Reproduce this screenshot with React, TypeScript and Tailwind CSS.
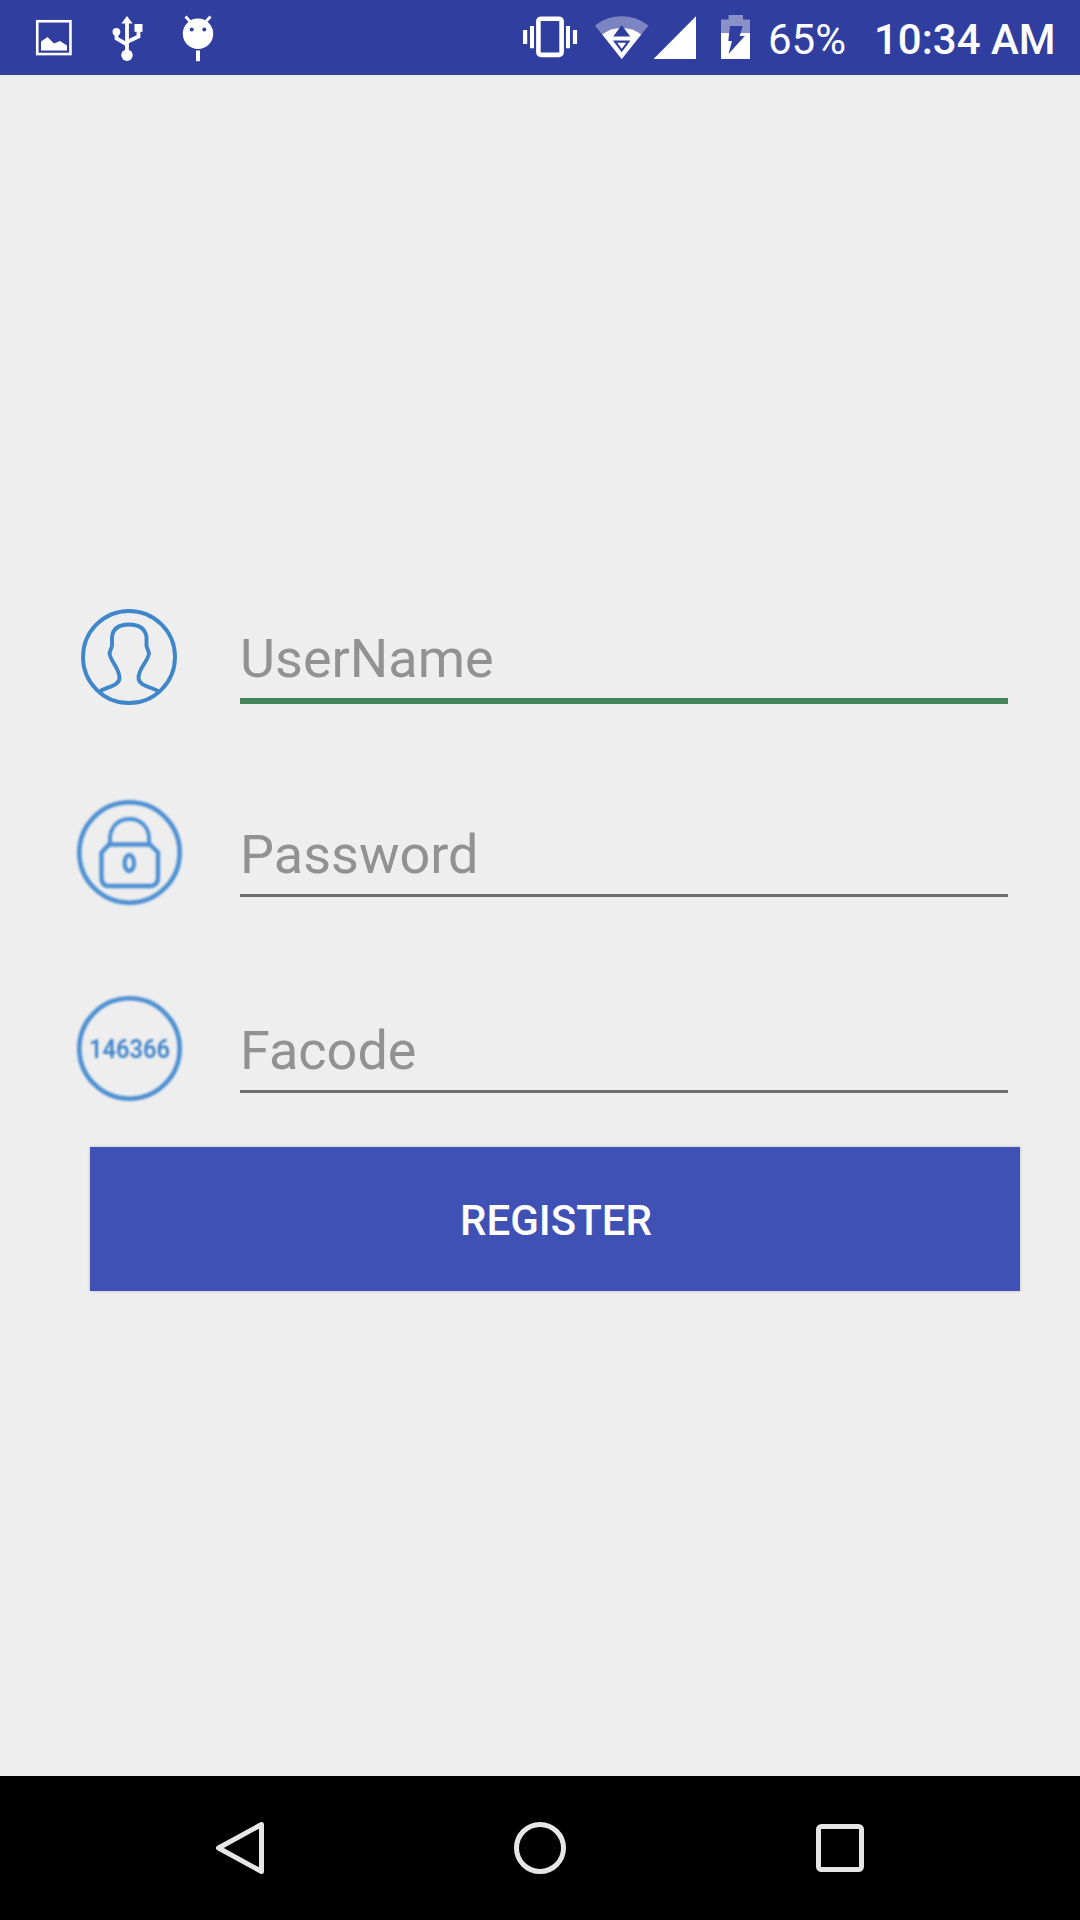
import React from "react";

function StatusBar() {
  return (
    <header className="flex h-[75px] shrink-0 bg-[#303f9f] text-white">
      <svg className="ml-[30px] h-[75px] w-[48px]" viewBox="30 0 48 75" fill="white">
        <rect x="37.25" y="21.25" width="33.2" height="32.8" fill="none" stroke="white" strokeWidth="2.6" />
        <path d="M41 50.500V41.500L47.500 37L54 43.500L60 41L67 45.500V50.500Z" />
      </svg>
      <svg className="ml-[25px] h-[75px] w-[48px]" viewBox="103 0 48 75" fill="white">
        <path d="M127 16L132.600 23.500H121.400Z" />
        <path d="M127 22V52M116.500 32V38.500L127 44.500M138.500 31V36.500L127 42" fill="none" stroke="white" strokeWidth="3.800" />
        <circle cx="127" cy="55.2" r="5.700" />
        <circle cx="116.400" cy="31.800" r="3.900" />
        <rect x="134.500" y="24" width="8" height="7.800" />
      </svg>
      <svg className="ml-[25px] h-[75px] w-[48px]" viewBox="176 0 48 75" fill="white">
        <circle cx="198" cy="33.700" r="15.200" />
        <path d="M185.500 16.500L191.500 23M210.500 16.500L204.500 23" stroke="white" strokeWidth="2.800" />
        <circle cx="191.700" cy="29.500" r="2" fill="#303f9f" />
        <circle cx="204.300" cy="29.500" r="2" fill="#303f9f" />
        <rect x="196" y="50.500" width="4" height="10.700" />
      </svg>
      <svg className="ml-[296px] h-[75px] w-[60px]" viewBox="520 0 60 75" fill="white">
        <rect x="538.400" y="18.700" width="23.200" height="36.200" rx="2.600" fill="none" stroke="white" strokeWidth="4.600" />
        <path d="M523 30h4.200v14H523zM530 26h4v22.300h-4zM566 26h4v22.300h-4zM572.900 30h4.200v14h-4.200z" />
      </svg>
      <svg className="ml-[10px] h-[75px] w-[60px]" viewBox="590 0 60 75" fill="white">
        <path d="M621.700 59L594.900 25.500A43 43 0 0 1 648.500 25.500Z" fillOpacity="0.37" />
        <path d="M621.700 59L602.300 34.500A32.500 32.500 0 0 1 641.200 34.500Z" />
        <path d="M621.700 25L630.200 36.500H613.200ZM613 40.500H630.400L621.700 52.300Z" fill="#303f9f" />
        <path d="M617.300 42.700H626.100L621.700 48.700Z" />
      </svg>
      <svg className="h-[75px] w-[50px]" viewBox="650 0 50 75" fill="white">
        <path d="M653.500 59H696V16.300Z" />
      </svg>
      <svg className="ml-[15px] h-[75px] w-[40px]" viewBox="715 0 40 75" fill="white">
        <path d="M721 33V19.500H728.500V15H743V19.500H750V33Z" fillOpacity="0.43" />
        <path d="M721 33H750V59H721Z" />
        <path d="M730 26H742.700L739.700 36H744.800L728.500 54L732 41H728.300Z" fill="#303f9f" />
      </svg>
      <span className="ml-[13px] mt-[15px] w-[80px] whitespace-nowrap text-[42px] leading-[49px]">65%</span>
      <span className="ml-[26px] mt-[15px] whitespace-nowrap text-[42px] font-medium leading-[49px]">10:34 AM</span>
    </header>
  );
}

function UserIcon() {
  return (
    <svg className="mr-px h-[96px] w-[96px] blur-[0.6px]" viewBox="0 0 96 96" fill="none" stroke="#3f86ca" strokeWidth="3.900">
      <circle cx="48" cy="48" r="46" />
      <path d="M19.500 82C25 78 38.500 77 38.500 69C38.500 59 29 52 28.500 44L31 37V28C32 19 38 15.500 48 15.500C58 15.500 64 19 65.500 28V37L68 44C67.500 52 57.500 59 57.500 69C57.500 77 71 78 77 82" />
    </svg>
  );
}

function LockIcon() {
  return (
    <svg className="h-[105px] w-[105px] blur-[0.8px]" viewBox="0 0 105 105" fill="none" stroke="#4d90d3" strokeWidth="3.800">
      <circle cx="52.500" cy="52.500" r="50.200" strokeWidth="4.600" />
      <path d="M33 44V37C34 26 42 19 52.500 19C63 19 71 26 72 37V44" />
      <path d="M32 44.500H73L81 52.500V77.500C81 83 78 86 73 86H32C27 86 24.500 83 24.500 77.500V52.500Z" strokeWidth="4.400" />
      <ellipse cx="52.300" cy="63" rx="4.700" ry="8" strokeWidth="4.200" />
    </svg>
  );
}

function CodeIcon() {
  return (
    <svg className="h-[105px] w-[105px] blur-[0.8px]" viewBox="0 0 105 105" fill="none">
      <circle cx="52.500" cy="52.500" r="50.200" stroke="#4d90d3" strokeWidth="4.600" />
      <text x="12" y="62" textLength="81" lengthAdjust="spacingAndGlyphs" className="fill-[#4385cb] text-[25px] font-semibold">
        146366
      </text>
    </svg>
  );
}

function Field({ icon, label, active = false }: { icon: React.ReactNode; label: string; active?: boolean }) {
  return (
    <div className="flex h-[196px]">
      <div className="ml-[77px] flex h-[105px] w-[105px] items-center justify-center">{icon}</div>
      <div className="ml-[58px] mt-[23px] w-[768px]">
        <label className="block h-[71px] whitespace-nowrap text-[54px] leading-[63px] text-[#929292]">{label}</label>
        <div className={active ? "h-[6px] w-full bg-[#438358]" : "h-[3px] w-full bg-[#6e6e6e]"} />
      </div>
    </div>
  );
}

function NavBar() {
  return (
    <nav className="flex h-[144px] shrink-0 items-center justify-center gap-[240px] bg-black">
      <svg className="h-[60px] w-[60px]" viewBox="210 1818 60 60" fill="none" stroke="#e6e6e6" strokeWidth="5" strokeLinejoin="round">
        <path d="M261.500 1824.500V1871.500L218.500 1848Z" />
      </svg>
      <svg className="h-[60px] w-[60px]" viewBox="0 0 60 60" fill="none" stroke="#e6e6e6" strokeWidth="5">
        <circle cx="30" cy="30" r="23.500" />
      </svg>
      <svg className="h-[60px] w-[60px]" viewBox="0 0 60 60" fill="none" stroke="#e6e6e6" strokeWidth="5">
        <rect x="8.500" y="8.500" width="43" height="43" rx="3" />
      </svg>
    </nav>
  );
}

export default function App() {
  return (
    <div className="flex h-[1920px] w-[1080px] flex-col overflow-hidden bg-[#eeeeee] font-[Roboto,sans-serif]">
      <StatusBar />
      <main className="flex flex-1 flex-col pt-[529px]">
        <Field icon={<UserIcon />} label="UserName" active />
        <Field icon={<LockIcon />} label="Password" />
        <div className="h-[151px]">
          <Field icon={<CodeIcon />} label="Facode" />
        </div>
        <button className="relative ml-[90px] h-[144px] w-[930px] bg-[#3f51b5] pl-[2px] pt-[3px] text-[42px] font-medium text-white shadow-[0_0_3px_rgba(0,0,0,0.22)]">
          REGISTER
        </button>
      </main>
      <NavBar />
    </div>
  );
}
